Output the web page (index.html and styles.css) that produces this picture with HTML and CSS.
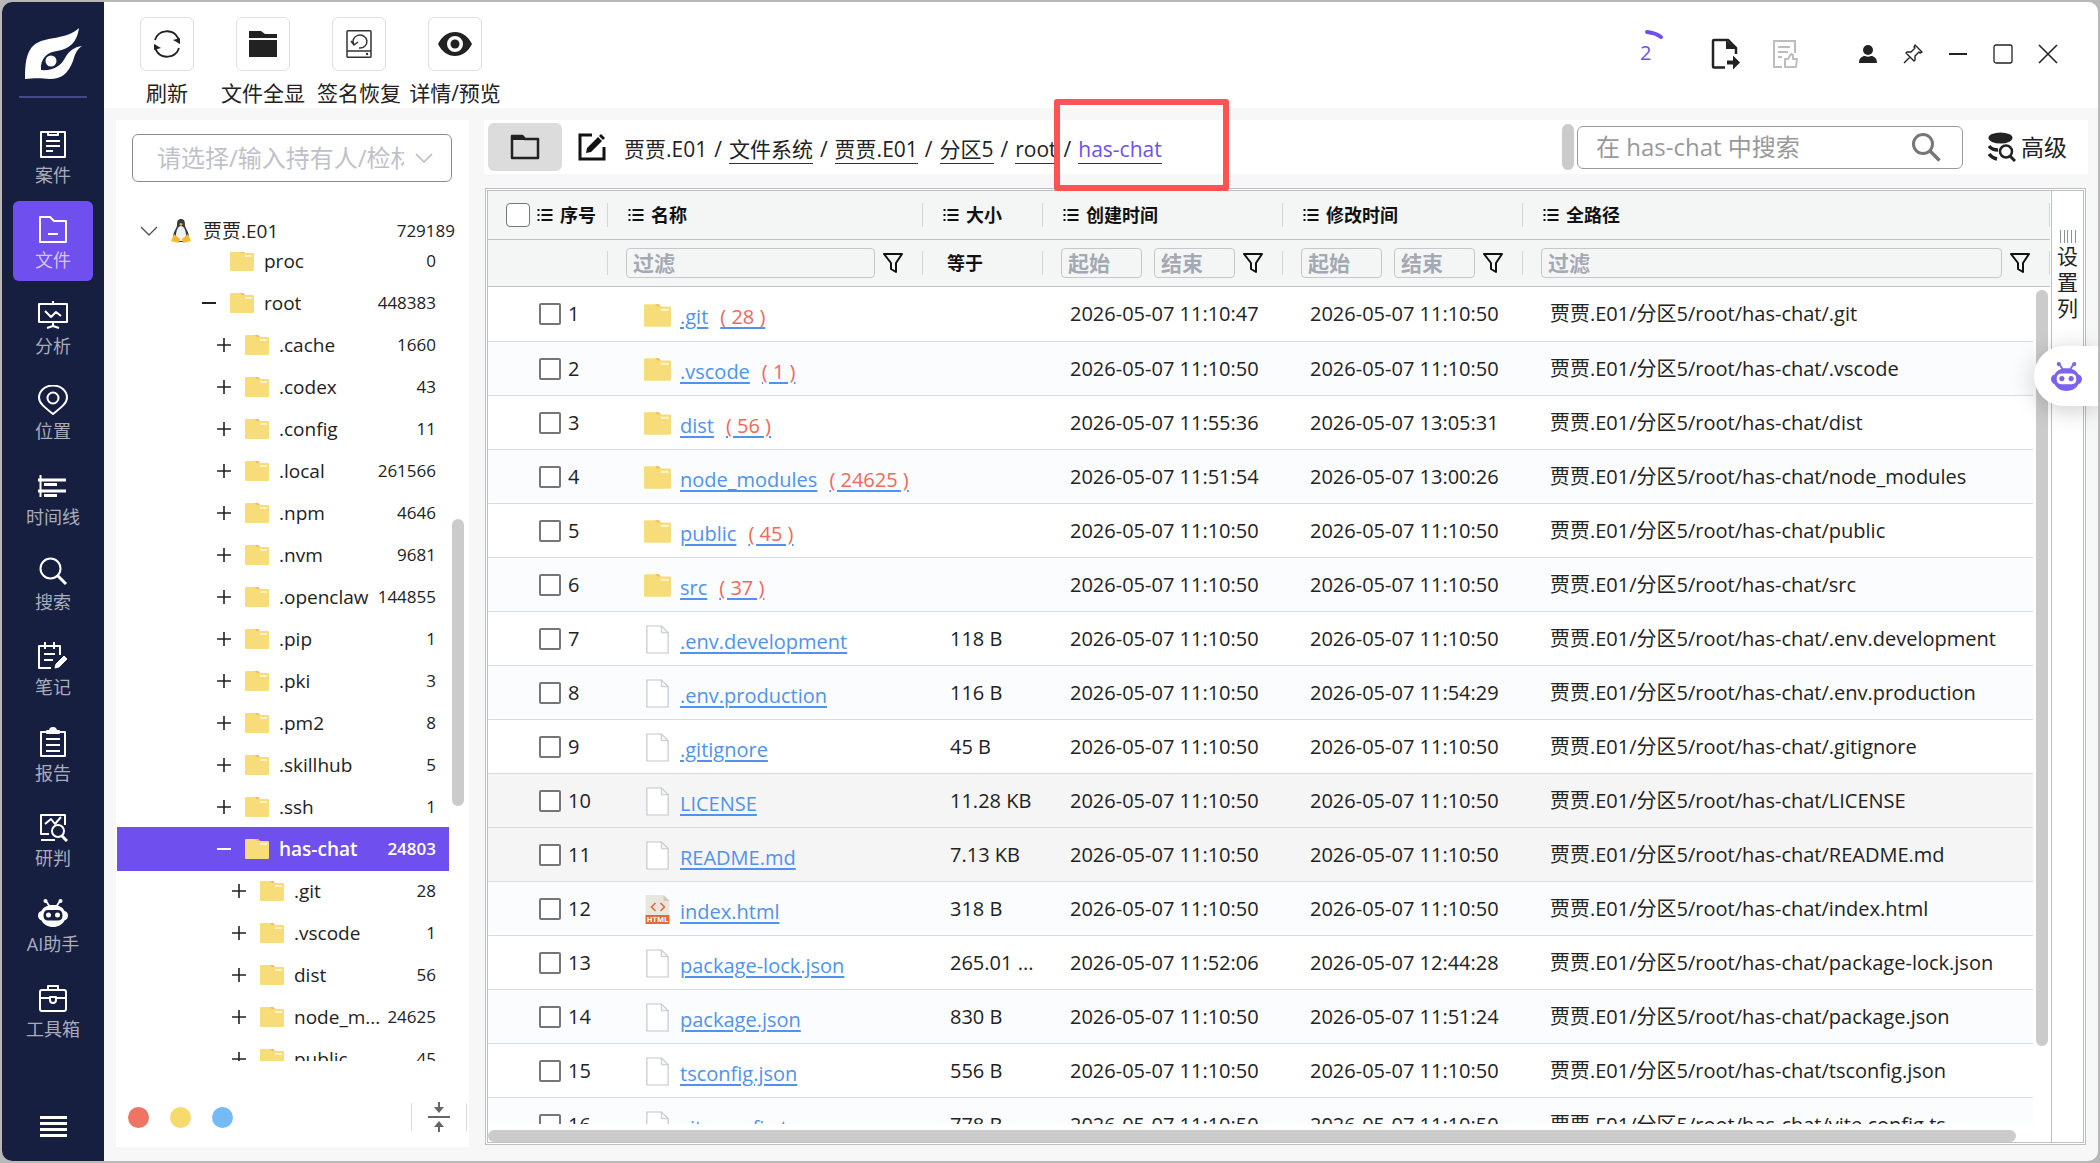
FILE: index.html
```html
<!DOCTYPE html>
<html lang="zh-CN">
<head>
    <meta charset="UTF-8">
    <meta name="viewport" content="width=device-width, initial-scale=1.0">
    <title>文件</title>
    <link rel="stylesheet" href="styles.css">
</head>
<body>
    <svg class="sprite" aria-hidden="true">
        <symbol id="i-folder" viewBox="0 0 24 20">
            <path fill="#f7dc7a" d="M1 0h12l2 2h8a1 1 0 0 1 1 1v16a1 1 0 0 1-1 1H1a1 1 0 0 1-1-1V1a1 1 0 0 1 1-1z"/>
            <path fill="#f3b95f" d="M10 0h3l2 2h-3z"/>
            <path fill="#fff3c4" d="M15 4h7v2h-7z"/>
        </symbol>
        <symbol id="i-file" viewBox="0 0 24 30">
            <path fill="#fff" stroke="#c3c6cc" stroke-width="1.2" d="M1 1h15l7 7v21H1z"/>
            <path fill="#f4f5f7" stroke="#c3c6cc" d="M16 1v7h7z"/>
        </symbol>
        <symbol id="i-html" viewBox="0 0 24 29">
            <path fill="#e9e7dd" d="M0 0h18l6 6v14H0z"/>
            <path fill="#cfccbd" d="M18 0l6 6h-6z"/>
            <path fill="none" stroke="#e2693a" stroke-width="1.6" d="M10 8l-4 4 4 4M15 8l4 4-4 4"/>
            <path fill="#e2693a" d="M0 20h24v9H0z"/>
            <text x="12" y="27.4" text-anchor="middle" font-family="Open Sans" font-size="7.5" font-weight="700" fill="#fff">HTML</text>
        </symbol>
        <symbol id="i-list" viewBox="0 0 15 14">
            <path fill="#111" d="M0 1h2v2H0zM4 1h11v2H4zM0 6h2v2H0zM4 6h11v2H4zM0 11h2v2H0zM4 11h11v2H4z"/>
        </symbol>
        <symbol id="i-funnel" viewBox="0 0 20 20">
            <path fill="none" stroke="#111" stroke-width="2" stroke-linejoin="round" d="M1 1h18l-6 9v9l-5-3v-6z"/>
        </symbol>
        <symbol id="i-plus" viewBox="0 0 14 14">
            <path fill="none" stroke="#222" stroke-width="1.600" d="M0 7h14M7 0v14"/>
        </symbol>
        <symbol id="i-minus" viewBox="0 0 14 14">
            <path fill="none" stroke="currentColor" stroke-width="2" d="M0 7h14"/>
        </symbol>
        <symbol id="i-robot" viewBox="0 0 30 28">
            <path fill="none" stroke="currentColor" stroke-width="1.8" d="M8 2l4 6M22 2l-4 6"/>
            <circle cx="7.500" cy="2" r="2" fill="currentColor"/>
            <circle cx="22.500" cy="2" r="2" fill="currentColor"/>
            <path fill="currentColor" fill-rule="evenodd" d="M15 6c6 0 10 2.500 11.500 6 2 .5 3.500 2 3.500 4.500s-1.500 4.500-3.500 5C24.500 25.500 20 28 15 28S5.500 25.500 3.500 21.500C1.500 21 0 19 0 16.500S1.500 12.500 3.500 12C5 8.500 9 6 15 6zM10 11c-3 0-4.500 2-4.500 5.500S7 21.500 10 21.500h10c3 0 4.500-1.500 4.500-5S23 11 20 11z"/>
            <circle cx="10.500" cy="16" r="2.500" fill="currentColor"/>
            <circle cx="19.500" cy="16" r="2.500" fill="currentColor"/>
        </symbol>
    </svg>

    <div class="window">
        <aside class="sidebar">
            <svg class="logo" viewBox="0 0 57 52">
                <path fill="#fff" fill-rule="evenodd" d="M54 0c-2 14-9 21-22 23-10 1-17 8-16 19 12 1 20-4 24-12 4-7 9-11 17-12-5 3-7 8-9 15C43 46 36 51 25 51 16 50 9 50 0 51 0 36 1 24 9 17 20 8 42 12 54 0z"/>
                <circle cx="26" cy="33" r="5.500" fill="#fff"/>
            </svg>
            <hr class="divider">
            <nav class="menu">
                <a class="menu-item" href="#">
                    <svg viewBox="0 0 30 30"><path d="M3 3h24v25H3zM10 2v4h10V2M8 12h14M8 17h14M8 22h7"/></svg>
                    案件
                </a>
                <a class="menu-item active" href="#">
                    <svg viewBox="0 0 30 30"><path d="M2 3h10l4 4h12v21H2zM10 20h10"/></svg>
                    文件
                </a>
                <a class="menu-item" href="#">
                    <svg viewBox="0 0 30 30"><path d="M1 4h28v18H1zM15 1v3M15 22v5M9 28l6-2 6 2M7 11l6 6 5-5 5 4"/></svg>
                    分析
                </a>
                <a class="menu-item" href="#">
                    <svg viewBox="0 0 30 30"><path d="M15 29C9 24 1 19 1 12.500a14 12 0 0 1 28 0C29 19 21 24 15 29z"/><circle cx="15" cy="13" r="5.500"/></svg>
                    位置
                </a>
                <a class="menu-item" href="#">
                    <svg viewBox="0 0 30 30"><path d="M2.500 4v22" stroke-width="2"/><path d="M0 9h28M6 13.500h13M0 20h28M6 24.500h13" stroke-width="3"/></svg>
                    时间线
                </a>
                <a class="menu-item" href="#">
                    <svg viewBox="0 0 30 30"><circle cx="12.500" cy="12.500" r="10"/><path d="M19.500 19.500L28 28" stroke-width="3"/></svg>
                    搜索
                </a>
                <a class="menu-item" href="#">
                    <svg viewBox="0 0 30 30"><path d="M13 27H1V5h21v9M7 1v7M16 1v7M6 13h11M6 19h9"/><path d="M17 27l1-4 8-8 3 3-8 8z" fill="#fff" stroke-width="1"/></svg>
                    笔记
                </a>
                <a class="menu-item" href="#">
                    <svg viewBox="0 0 30 30"><path d="M3 5h24v24H3zM8 12h14M8 18h14M8 24h14"/><path d="M9 6V4h3a3 3 0 0 1 6 0h3v2z" fill="#fff"/></svg>
                    报告
                </a>
                <a class="menu-item" href="#">
                    <svg viewBox="0 0 30 30"><path d="M27 13V3H3v19h8M3 28h14M7 12l6-5 4 5 6-7"/><circle cx="20" cy="19" r="6"/><path d="M24 24l5 5" stroke-width="3"/></svg>
                    研判
                </a>
                <a class="menu-item" href="#">
                    <svg viewBox="0 0 30 28" class="robot"><use href="#i-robot"/></svg>
                    AI助手
                </a>
                <a class="menu-item" href="#">
                    <svg viewBox="0 0 30 30"><rect x="2" y="7" width="26" height="21" rx="2"/><path d="M10 7V3h10v4M2 15h10M18 15h10M12 14v3a3 3 0 0 0 6 0v-3z"/></svg>
                    工具箱
                </a>
            </nav>
            <button class="collapse" aria-label="菜单">
                <svg viewBox="0 0 27 22"><path fill="#fff" d="M0 0h27v3H0zM0 6h27v3H0zM0 12h27v3H0zM0 18h27v3H0z"/></svg>
            </button>
        </aside>

        <div class="content">
            <header class="toolbar">
                <div class="tools">
                    <button class="tool">
                        <span class="tool-icon"><svg viewBox="0 0 28 28"><path fill="none" stroke="#222" stroke-width="1.8" d="M2 10a12.500 12.500 0 0 1 23-2l1 5M26 18a12.500 12.500 0 0 1-23 2l-1-5"/><path fill="#222" d="M20 10l7 4V8zM8 18l-7-4v6z"/></svg></span>
                        刷新
                    </button>
                    <button class="tool">
                        <span class="tool-icon"><svg viewBox="0 0 28 28"><path fill="#222" d="M0 1h12l4 3h12v4H0zM0 10h28v17H0z"/></svg></span>
                        文件全显
                    </button>
                    <button class="tool">
                        <span class="tool-icon"><svg viewBox="0 0 28 28"><g fill="none" stroke="#333" stroke-width="1.5"><rect x="2" y="0.800" width="24" height="26.500" rx="1"/><path d="M2 21h24M9 15a7 6.500 0 1 1 5 3M6 11l3 4 4-3"/></g><circle cx="22" cy="24" r="1.200" fill="#333"/></svg></span>
                        签名恢复
                    </button>
                    <button class="tool">
                        <span class="tool-icon"><svg class="wide" viewBox="0 0 34 24"><path fill="#222" fill-rule="evenodd" d="M0 12C4 4 10 0 17 0s13 4 17 12c-4 8-10 12-17 12S4 20 0 12zM17 4a8 8 0 1 0 0 16 8 8 0 0 0 0-16z"/><circle cx="17" cy="12" r="4.500" fill="#222"/></svg></span>
                        详情/预览
                    </button>
                </div>
                <div class="actions">
                    <div class="task">
                        <svg viewBox="0 0 22 12"><path fill="none" stroke="#6f50ef" stroke-width="4" stroke-linecap="round" d="M3 3q9 1 14 5"/></svg>
                        <span>2</span>
                    </div>
                    <button class="action" aria-label="导出">
                        <svg width="30" height="32" viewBox="0 0 30 32"><path fill="none" stroke="#222" stroke-width="2.500" d="M14 29.500H3a1 1 0 0 1-1-1V3a1 1 0 0 1 1-1h14l8 8v6"/><path fill="#222" d="M15 2l10 9H15zM16 22.500h6v-5l7 7-7 7v-5h-6z"/></svg>
                    </button>
                    <button class="action" aria-label="报告">
                        <svg width="26" height="30" viewBox="0 0 26 30"><path fill="none" stroke="#bdbdbd" stroke-width="2" d="M10 28H2V2h21v12M6 8h12M6 13h10M6 18h4"/><path fill="none" stroke="#bdbdbd" stroke-width="2" stroke-linejoin="round" d="M13 20h3l3-5 2 1v4h4l-1 8H13z"/></svg>
                    </button>
                    <div class="window-buttons">
                        <button aria-label="用户"><svg viewBox="0 0 20 20"><circle cx="10" cy="6" r="5" fill="#222"/><path fill="#222" d="M1 19c0-5 3-7 6-7 2 1 4 1 6 0 3 0 6 2 6 7z"/></svg></button>
                        <button aria-label="置顶"><svg viewBox="0 0 20 20"><path fill="none" stroke="#222" stroke-width="1.400" stroke-linejoin="round" d="M12 1l7 7-2 1-1-1-4 4v4l-1 1-8-8 1-1h4l4-4-1-1zM7 13l-6 6"/></svg></button>
                        <button aria-label="最小化"><svg viewBox="0 0 20 20"><path stroke="#222" stroke-width="2" d="M1 10h18"/></svg></button>
                        <button aria-label="最大化"><svg viewBox="0 0 20 20"><rect x="1" y="1" width="18" height="18" rx="2" fill="none" stroke="#222" stroke-width="1.300"/></svg></button>
                        <button aria-label="关闭"><svg viewBox="0 0 20 20"><path stroke="#222" stroke-width="1.600" d="M1 1l18 18M19 1L1 19"/></svg></button>
                    </div>
                </div>
            </header>

            <div class="panels">
                <section class="tree-panel">
                    <div class="owner">
                        <input type="text" aria-label="持有人" placeholder="请选择/输入持有人/检材">
                        <svg viewBox="0 0 18 10"><path fill="none" stroke="#b5b8bf" stroke-width="1.500" d="M1 1l8 8 8-8"/></svg>
                    </div>
                    <div class="tree-root">
                        <svg class="chevron" viewBox="0 0 18 10"><path fill="none" stroke="#555" stroke-width="1.400" d="M1 1l8 8 8-8"/></svg>
                        <svg class="tux" viewBox="0 0 20 24">
                            <path fill="#2f3b45" d="M10 0c3 0 4 2 4 6 0 3 4 7 4 12 0 3-3 5-8 5s-8-2-8-5c0-5 4-9 4-12 0-4 1-6 4-6z"/>
                            <path fill="#f2f2f2" d="M10 7c3 0 5 5 5 9s-2 6-5 6-5-2-5-6 2-9 5-9z"/>
                            <path fill="#f5b82e" d="M8 5l2-1 2 1-2 2zM3 15l6 5-1 4-8-2zM17 15l-6 5 1 4 8-2z"/>
                        </svg>
                        <span class="name">贾贾.E01</span>
                        <span class="count">729189</span>
                    </div>
                    <div class="tree-scroll">
                        <ul class="tree">
                            <li class="level-1"><span class="toggle"></span><svg class="folder"><use href="#i-folder"/></svg><span class="name">proc</span><span class="count">0</span></li>
                            <li class="level-1"><svg class="toggle"><use href="#i-minus"/></svg><svg class="folder"><use href="#i-folder"/></svg><span class="name">root</span><span class="count">448383</span></li>
                            <li class="level-2"><svg class="toggle"><use href="#i-plus"/></svg><svg class="folder"><use href="#i-folder"/></svg><span class="name">.cache</span><span class="count">1660</span></li>
                            <li class="level-2"><svg class="toggle"><use href="#i-plus"/></svg><svg class="folder"><use href="#i-folder"/></svg><span class="name">.codex</span><span class="count">43</span></li>
                            <li class="level-2"><svg class="toggle"><use href="#i-plus"/></svg><svg class="folder"><use href="#i-folder"/></svg><span class="name">.config</span><span class="count">11</span></li>
                            <li class="level-2"><svg class="toggle"><use href="#i-plus"/></svg><svg class="folder"><use href="#i-folder"/></svg><span class="name">.local</span><span class="count">261566</span></li>
                            <li class="level-2"><svg class="toggle"><use href="#i-plus"/></svg><svg class="folder"><use href="#i-folder"/></svg><span class="name">.npm</span><span class="count">4646</span></li>
                            <li class="level-2"><svg class="toggle"><use href="#i-plus"/></svg><svg class="folder"><use href="#i-folder"/></svg><span class="name">.nvm</span><span class="count">9681</span></li>
                            <li class="level-2"><svg class="toggle"><use href="#i-plus"/></svg><svg class="folder"><use href="#i-folder"/></svg><span class="name">.openclaw</span><span class="count">144855</span></li>
                            <li class="level-2"><svg class="toggle"><use href="#i-plus"/></svg><svg class="folder"><use href="#i-folder"/></svg><span class="name">.pip</span><span class="count">1</span></li>
                            <li class="level-2"><svg class="toggle"><use href="#i-plus"/></svg><svg class="folder"><use href="#i-folder"/></svg><span class="name">.pki</span><span class="count">3</span></li>
                            <li class="level-2"><svg class="toggle"><use href="#i-plus"/></svg><svg class="folder"><use href="#i-folder"/></svg><span class="name">.pm2</span><span class="count">8</span></li>
                            <li class="level-2"><svg class="toggle"><use href="#i-plus"/></svg><svg class="folder"><use href="#i-folder"/></svg><span class="name">.skillhub</span><span class="count">5</span></li>
                            <li class="level-2"><svg class="toggle"><use href="#i-plus"/></svg><svg class="folder"><use href="#i-folder"/></svg><span class="name">.ssh</span><span class="count">1</span></li>
                            <li class="level-2 selected"><svg class="toggle"><use href="#i-minus"/></svg><svg class="folder"><use href="#i-folder"/></svg><span class="name">has-chat</span><span class="count">24803</span></li>
                            <li class="level-3"><svg class="toggle"><use href="#i-plus"/></svg><svg class="folder"><use href="#i-folder"/></svg><span class="name">.git</span><span class="count">28</span></li>
                            <li class="level-3"><svg class="toggle"><use href="#i-plus"/></svg><svg class="folder"><use href="#i-folder"/></svg><span class="name">.vscode</span><span class="count">1</span></li>
                            <li class="level-3"><svg class="toggle"><use href="#i-plus"/></svg><svg class="folder"><use href="#i-folder"/></svg><span class="name">dist</span><span class="count">56</span></li>
                            <li class="level-3"><svg class="toggle"><use href="#i-plus"/></svg><svg class="folder"><use href="#i-folder"/></svg><span class="name">node_m...</span><span class="count">24625</span></li>
                            <li class="level-3"><svg class="toggle"><use href="#i-plus"/></svg><svg class="folder"><use href="#i-folder"/></svg><span class="name">public</span><span class="count">45</span></li>
                        </ul>
                        <div class="tree-bar"></div>
                    </div>
                    <div class="tree-footer">
                        <span class="dot red"></span>
                        <span class="dot yellow"></span>
                        <span class="dot blue"></span>
                        <button class="fold" aria-label="全部折叠">
                            <svg viewBox="0 0 22 30"><path fill="#666" d="M0 14h22v2H0zM10 0h2v5h4l-5 6-5-6h4zM10 30h2v-5h4l-5-6-5 6h4z"/></svg>
                        </button>
                    </div>
                </section>

                <main class="main">
                    <div class="path-bar">
                        <button class="folder-button" aria-label="文件夹">
                            <svg viewBox="0 0 30 26"><path fill="none" stroke="#222" stroke-width="2.500" stroke-linejoin="round" d="M2 2h10l3 3h13v19H2z"/><path fill="#222" d="M2 1h11l3 5H2z"/></svg>
                        </button>
                        <button class="edit-button" aria-label="编辑">
                            <svg viewBox="0 0 28 28"><path fill="none" stroke="#111" stroke-width="3" d="M14 2H2v24h24V14"/><path fill="#111" d="M8 20l1-5L20 4l4 4-11 11zM21 3l2-2 4 4-2 2z"/></svg>
                        </button>
                        <nav class="crumbs">
                            <span>贾贾.E01</span>/
                            <a href="#">文件系统</a>/
                            <a href="#">贾贾.E01</a>/
                            <a href="#">分区5</a>/
                            <a href="#">root</a>/
                            <span class="current"><a href="#">has-chat</a><span class="mark"></span></span>
                        </nav>
                        <span class="path-thumb"></span>
                        <div class="search">
                            <input type="text" aria-label="搜索" placeholder="在 has-chat 中搜索">
                            <svg viewBox="0 0 30 30"><circle cx="12" cy="12" r="9.500" fill="none" stroke="#777" stroke-width="3"/><path stroke="#777" stroke-width="3.500" d="M19 19l9.500 9.500"/></svg>
                        </div>
                        <button class="advanced">
                            <svg viewBox="0 0 28 30"><ellipse cx="12.500" cy="6" rx="12" ry="5.500" fill="#222"/><path fill="none" stroke="#222" stroke-width="3.500" d="M1 14q3 4 9 4M1 22q3 4 8 5"/><circle cx="18" cy="19.500" r="6" fill="#fff" stroke="#222" stroke-width="2.500"/><path stroke="#222" stroke-width="3" d="M22 24l5 5"/></svg>
                            高级
                        </button>
                    </div>

                    <div class="grid">
                        <div class="grid-main">
                            <div class="grid-view">
                                <table>
                                    <colgroup>
                                        <col class="col-index"><col class="col-name"><col class="col-size"><col class="col-date"><col class="col-date"><col><col class="col-bar">
                                    </colgroup>
                                    <thead>
                                        <tr class="titles">
                                            <th><div class="title first"><input type="checkbox" aria-label="全选"><svg><use href="#i-list"/></svg>序号</div></th>
                                            <th><div class="title"><svg><use href="#i-list"/></svg>名称</div></th>
                                            <th><div class="title"><svg><use href="#i-list"/></svg>大小</div></th>
                                            <th><div class="title"><svg><use href="#i-list"/></svg>创建时间</div></th>
                                            <th><div class="title"><svg><use href="#i-list"/></svg>修改时间</div></th>
                                            <th colspan="2"><div class="title"><svg><use href="#i-list"/></svg>全路径</div></th>
                                        </tr>
                                        <tr class="filters">
                                            <th><div class="filter"></div></th>
                                            <th><div class="filter"><input type="text" aria-label="名称过滤" placeholder="过滤"><svg><use href="#i-funnel"/></svg></div></th>
                                            <th><div class="filter equal">等于</div></th>
                                            <th><div class="filter range"><input type="text" aria-label="创建时间起始" placeholder="起始"><input type="text" aria-label="创建时间结束" placeholder="结束"><svg><use href="#i-funnel"/></svg></div></th>
                                            <th><div class="filter range"><input type="text" aria-label="修改时间起始" placeholder="起始"><input type="text" aria-label="修改时间结束" placeholder="结束"><svg><use href="#i-funnel"/></svg></div></th>
                                            <th colspan="2"><div class="filter"><input type="text" aria-label="全路径过滤" placeholder="过滤"><svg><use href="#i-funnel"/></svg></div></th>
                                        </tr>
                                    </thead>
                                    <tbody>
                                        <tr><td><label><input type="checkbox">1</label></td><td><div class="file"><svg><use href="#i-folder"/></svg><a href="#">.git<span>( 28 )</span></a></div></td><td></td><td>2026-05-07 11:10:47</td><td>2026-05-07 11:10:50</td><td>贾贾.E01/分区5/root/has-chat/.git</td><td></td></tr>
                                        <tr><td><label><input type="checkbox">2</label></td><td><div class="file"><svg><use href="#i-folder"/></svg><a href="#">.vscode<span>( 1 )</span></a></div></td><td></td><td>2026-05-07 11:10:50</td><td>2026-05-07 11:10:50</td><td>贾贾.E01/分区5/root/has-chat/.vscode</td><td></td></tr>
                                        <tr><td><label><input type="checkbox">3</label></td><td><div class="file"><svg><use href="#i-folder"/></svg><a href="#">dist<span>( 56 )</span></a></div></td><td></td><td>2026-05-07 11:55:36</td><td>2026-05-07 13:05:31</td><td>贾贾.E01/分区5/root/has-chat/dist</td><td></td></tr>
                                        <tr><td><label><input type="checkbox">4</label></td><td><div class="file"><svg><use href="#i-folder"/></svg><a href="#">node_modules<span>( 24625 )</span></a></div></td><td></td><td>2026-05-07 11:51:54</td><td>2026-05-07 13:00:26</td><td>贾贾.E01/分区5/root/has-chat/node_modules</td><td></td></tr>
                                        <tr><td><label><input type="checkbox">5</label></td><td><div class="file"><svg><use href="#i-folder"/></svg><a href="#">public<span>( 45 )</span></a></div></td><td></td><td>2026-05-07 11:10:50</td><td>2026-05-07 11:10:50</td><td>贾贾.E01/分区5/root/has-chat/public</td><td></td></tr>
                                        <tr><td><label><input type="checkbox">6</label></td><td><div class="file"><svg><use href="#i-folder"/></svg><a href="#">src<span>( 37 )</span></a></div></td><td></td><td>2026-05-07 11:10:50</td><td>2026-05-07 11:10:50</td><td>贾贾.E01/分区5/root/has-chat/src</td><td></td></tr>
                                        <tr><td><label><input type="checkbox">7</label></td><td><div class="file"><svg><use href="#i-file"/></svg><a href="#">.env.development</a></div></td><td>118 B</td><td>2026-05-07 11:10:50</td><td>2026-05-07 11:10:50</td><td>贾贾.E01/分区5/root/has-chat/.env.development</td><td></td></tr>
                                        <tr><td><label><input type="checkbox">8</label></td><td><div class="file"><svg><use href="#i-file"/></svg><a href="#">.env.production</a></div></td><td>116 B</td><td>2026-05-07 11:10:50</td><td>2026-05-07 11:54:29</td><td>贾贾.E01/分区5/root/has-chat/.env.production</td><td></td></tr>
                                        <tr><td><label><input type="checkbox">9</label></td><td><div class="file"><svg><use href="#i-file"/></svg><a href="#">.gitignore</a></div></td><td>45 B</td><td>2026-05-07 11:10:50</td><td>2026-05-07 11:10:50</td><td>贾贾.E01/分区5/root/has-chat/.gitignore</td><td></td></tr>
                                        <tr class="hover"><td><label><input type="checkbox">10</label></td><td><div class="file"><svg><use href="#i-file"/></svg><a href="#">LICENSE</a></div></td><td>11.28 KB</td><td>2026-05-07 11:10:50</td><td>2026-05-07 11:10:50</td><td>贾贾.E01/分区5/root/has-chat/LICENSE</td><td></td></tr>
                                        <tr class="hover"><td><label><input type="checkbox">11</label></td><td><div class="file"><svg><use href="#i-file"/></svg><a href="#">README.md</a></div></td><td>7.13 KB</td><td>2026-05-07 11:10:50</td><td>2026-05-07 11:10:50</td><td>贾贾.E01/分区5/root/has-chat/README.md</td><td></td></tr>
                                        <tr><td><label><input type="checkbox">12</label></td><td><div class="file"><svg><use href="#i-html"/></svg><a href="#">index.html</a></div></td><td>318 B</td><td>2026-05-07 11:10:50</td><td>2026-05-07 11:10:50</td><td>贾贾.E01/分区5/root/has-chat/index.html</td><td></td></tr>
                                        <tr><td><label><input type="checkbox">13</label></td><td><div class="file"><svg><use href="#i-file"/></svg><a href="#">package-lock.json</a></div></td><td>265.01 ...</td><td>2026-05-07 11:52:06</td><td>2026-05-07 12:44:28</td><td>贾贾.E01/分区5/root/has-chat/package-lock.json</td><td></td></tr>
                                        <tr><td><label><input type="checkbox">14</label></td><td><div class="file"><svg><use href="#i-file"/></svg><a href="#">package.json</a></div></td><td>830 B</td><td>2026-05-07 11:10:50</td><td>2026-05-07 11:51:24</td><td>贾贾.E01/分区5/root/has-chat/package.json</td><td></td></tr>
                                        <tr><td><label><input type="checkbox">15</label></td><td><div class="file"><svg><use href="#i-file"/></svg><a href="#">tsconfig.json</a></div></td><td>556 B</td><td>2026-05-07 11:10:50</td><td>2026-05-07 11:10:50</td><td>贾贾.E01/分区5/root/has-chat/tsconfig.json</td><td></td></tr>
                                        <tr><td><label><input type="checkbox">16</label></td><td><div class="file"><svg><use href="#i-file"/></svg><a href="#">vite.config.ts</a></div></td><td>778 B</td><td>2026-05-07 11:10:50</td><td>2026-05-07 11:10:50</td><td>贾贾.E01/分区5/root/has-chat/vite.config.ts</td><td></td></tr>
                                    </tbody>
                                </table>
                                <div class="bar-y"></div>
                            </div>
                            <div class="bar-x"></div>
                        </div>
                        <button class="columns">
                            <svg viewBox="0 0 16 13"><path fill="#8d9499" d="M0 0h1v13H0zM4 0h1v13H4zM7 0h1v13H7zM11 0h1v13h-1zM15 0h1v13h-1z"/></svg>
                            <span>设</span><span>置</span><span>列</span>
                        </button>
                    </div>
                </main>
            </div>
        </div>
        <button class="assistant" aria-label="AI助手"><svg viewBox="0 0 30 28"><use href="#i-robot"/></svg></button>
    </div>
</body>
</html>
```

FILE: styles.css
```css
* {
    box-sizing: border-box;
}

body {
    margin: 0;
    height: 100vh;
    padding: 2px;
    background: #b8b8b8;
    color: #222;
    font-family: "Open Sans", "Noto Sans CJK SC", sans-serif;
    font-size: 20px;
    line-height: 28px;
    overflow: hidden;
}

button,
input {
    font: inherit;
    color: inherit;
    margin: 0;
}

button {
    background: none;
    border: none;
    padding: 0;
    cursor: pointer;
}

svg {
    display: block;
    flex-shrink: 0;
}

.sprite {
    position: absolute;
    width: 0;
    height: 0;
}

.window {
    position: relative;
    display: flex;
    height: 100%;
    background: #f7f7f7;
    border-radius: 10px;
    overflow: hidden;
}

/* sidebar */
.sidebar {
    width: 102px;
    flex-shrink: 0;
    display: flex;
    flex-direction: column;
    align-items: center;
    background: #171f40;
    padding-bottom: 23px;
}

.logo {
    width: 57px;
    height: 52px;
    margin: 26px 0 16px;
}

.divider {
    width: 68px;
    margin: 0 0 18px;
    border: none;
    border-top: 2px solid #434a85;
}

.menu {
    flex: 1;
    display: flex;
    flex-direction: column;
    justify-content: space-between;
    margin-bottom: 66px;
}

.menu-item {
    width: 80px;
    height: 80px;
    display: flex;
    flex-direction: column;
    align-items: center;
    justify-content: center;
    gap: 3px;
    padding-top: 5px;
    border-radius: 6px;
    color: #a9adbb;
    font-size: 18px;
    line-height: 26px;
    text-decoration: none;
    white-space: nowrap;
}

.menu-item svg {
    width: 30px;
    height: 30px;
    fill: none;
    stroke: #fff;
    stroke-width: 2;
    stroke-linejoin: round;
}

.menu-item .robot {
    stroke: none;
    color: #fff;
}

.menu-item.active {
    background: #6f50ef;
    color: #cfc5fa;
}

.collapse svg {
    width: 27px;
    height: 22px;
}

/* toolbar */
.content {
    flex: 1;
    min-width: 0;
    display: flex;
    flex-direction: column;
}

.toolbar {
    height: 106px;
    flex-shrink: 0;
    display: flex;
    justify-content: space-between;
    background: #fff;
    padding: 15px 40px 0 21px;
}

.tools {
    display: flex;
    gap: 12px;
}

.tool {
    width: 84px;
    display: flex;
    flex-direction: column;
    align-items: center;
    gap: 8px;
    font-size: 21px;
    white-space: nowrap;
}

.tool-icon {
    width: 54px;
    height: 54px;
    display: flex;
    align-items: center;
    justify-content: center;
    border: 1px solid #e0e0e0;
    border-radius: 6px;
}

.tool-icon svg {
    width: 28px;
    height: 28px;
}

.tool-icon .wide {
    width: 34px;
    height: 24px;
}

.actions {
    height: 74px;
    display: flex;
    align-items: center;
    gap: 31px;
}

.task {
    width: 22px;
    height: 60px;
    margin-right: 18px;
    color: #6f50ef;
    line-height: 24px;
}

.task svg {
    width: 22px;
    height: 12px;
    margin-left: 4px;
    margin-top: 5px;
}

.window-buttons {
    display: flex;
    gap: 25px;
    margin-left: 29px;
}

.window-buttons svg {
    width: 20px;
    height: 20px;
}

.panels {
    flex: 1;
    min-height: 0;
    display: flex;
    gap: 15px;
    padding: 12px 10px 14px 12px;
}

/* tree */
.tree-panel {
    width: 353px;
    flex-shrink: 0;
    display: flex;
    flex-direction: column;
    background: #fff;
}

.owner {
    height: 48px;
    flex-shrink: 0;
    display: flex;
    align-items: center;
    gap: 11px;
    margin: 14px 17px 0 16px;
    padding: 0 18px 0 24px;
    border: 1px solid #8c8c8c;
    border-radius: 6px;
}

.owner input {
    flex: 1;
    min-width: 0;
    padding: 0;
    border: none;
    outline: none;
    font-size: 24px;
}

.owner input::placeholder {
    color: #bfc1c9;
}

.owner svg {
    width: 18px;
    height: 10px;
}

.tree-root {
    height: 42px;
    display: flex;
    align-items: center;
    margin-top: 28px;
    padding: 0 14px 0 24px;
    font-size: 19px;
}

.chevron {
    width: 18px;
    height: 10px;
}

.tux {
    width: 20px;
    height: 24px;
    margin: 0 12px 0 13px;
}

.name {
    flex: 1;
    min-width: 0;
    overflow: hidden;
    text-overflow: ellipsis;
    white-space: nowrap;
}

.count {
    font-size: 17px;
}

.tree-scroll {
    position: relative;
    flex: 1;
    min-height: 0;
    overflow: hidden;
}

.tree {
    list-style: none;
    margin: -12px 20px 0 1px;
    padding: 0;
    font-size: 19px;
}

.tree li {
    height: 42px;
    display: flex;
    align-items: center;
    padding-right: 13px;
}

.tree .level-1 {
    padding-left: 85px;
}

.tree .level-2 {
    padding-left: 100px;
}

.tree .level-3 {
    padding-left: 115px;
}

.tree li.selected {
    height: 44px;
    margin: -1px 0;
    background: #6f50ef;
    color: #fff;
    font-weight: 600;
}

.toggle {
    width: 14px;
    height: 14px;
}

.folder {
    width: 24px;
    height: 20px;
    margin: 0 10px 0 14px;
}

.tree-bar {
    position: absolute;
    top: 267px;
    bottom: 255px;
    right: 5px;
    width: 12px;
    border-radius: 6px;
    background: #cbcbcb;
}

.tree-footer {
    height: 86px;
    flex-shrink: 0;
    display: flex;
    align-items: center;
    gap: 21px;
    padding: 26px 2px 0 12px;
}

.dot {
    width: 21px;
    height: 21px;
    border-radius: 50%;
}

.red {
    background: #ee7564;
}

.yellow {
    background: #f7da6e;
}

.blue {
    background: #76baf5;
}

.fold {
    width: 56px;
    height: 28px;
    margin-left: auto;
    display: flex;
    align-items: center;
    justify-content: center;
    border: 1px solid #dcdcdc;
    border-width: 0 1px;
}

.fold svg {
    width: 22px;
    height: 30px;
}

/* path bar */
.main {
    flex: 1;
    min-width: 0;
    display: flex;
    flex-direction: column;
    gap: 12px;
}

.path-bar {
    height: 54px;
    flex-shrink: 0;
    display: flex;
    align-items: center;
    background: #fff;
    padding: 0 21px 0 4px;
}

.folder-button {
    width: 74px;
    height: 48px;
    display: flex;
    align-items: center;
    justify-content: center;
    border-radius: 6px;
    background: #dcdcdc;
}

.folder-button svg {
    width: 30px;
    height: 26px;
}

.edit-button {
    margin: 0 18px 0 16px;
}

.edit-button svg {
    width: 28px;
    height: 28px;
}

.crumbs {
    flex: 1;
    display: flex;
    align-items: center;
    gap: 7px;
    padding-top: 4px;
    font-size: 21px;
    white-space: nowrap;
}

.crumbs a {
    color: inherit;
    text-decoration: none;
    border-bottom: 1px solid #333;
}

.crumbs .current {
    position: relative;
    color: #6f50ef;
}

/* red frame round the current folder */
.mark {
    position: absolute;
    top: -36px;
    left: -24px;
    width: 175px;
    height: 92px;
    border: 6px solid #ff5252;
    border-radius: 3px;
    pointer-events: none;
}

.path-thumb {
    width: 12px;
    height: 46px;
    border-radius: 6px;
    background: #cbcbcb;
}

.search {
    width: 386px;
    height: 43px;
    display: flex;
    align-items: center;
    margin: 0 25px 0 3px;
    padding: 0 21px 0 18px;
    border: 1px solid #999;
    border-radius: 6px;
}

.search input {
    flex: 1;
    min-width: 0;
    padding: 0;
    border: none;
    outline: none;
    font-size: 24px;
}

.search input::placeholder {
    color: #999;
}

.search svg {
    width: 30px;
    height: 30px;
}

.advanced {
    display: flex;
    align-items: center;
    gap: 5px;
    font-size: 23px;
}

.advanced svg {
    width: 28px;
    height: 30px;
}

/* file grid */
.grid {
    flex: 1;
    min-height: 0;
    display: flex;
    margin: 2px 2px 2px 1px;
    border: 3px double #bdc0c3;
    background: #fff;
}

.grid-main {
    flex: 1;
    min-width: 0;
    display: flex;
    flex-direction: column;
    gap: 6px;
    padding-right: 1px;
}

.grid-view {
    position: relative;
    flex: 1;
    min-height: 0;
    overflow: hidden;
}

table {
    width: 100%;
    table-layout: fixed;
    border-collapse: separate;
    border-spacing: 0;
}

.col-index,
.col-size {
    width: 120px;
}

.col-name {
    width: 315px;
}

.col-date {
    width: 240px;
}

.col-bar {
    width: 17px;
}

th {
    padding: 0;
    background: #f4f6f6;
    border-bottom: 1px solid #bdc3c7;
    font-size: 18px;
    font-weight: 700;
    color: #111;
    text-align: left;
}

.titles th {
    height: 49px;
}

.filters th {
    height: 47px;
}

.title,
.filter {
    height: 24px;
    display: flex;
    align-items: center;
    border-right: 1px solid #d3d7d9;
    padding-left: 20px;
}

.title {
    gap: 7px;
}

.title.first {
    padding-left: 18px;
}

.title svg {
    width: 16px;
    height: 14px;
}

.filter {
    gap: 8px;
    padding: 0 19px 0 18px;
}

.filter.equal {
    padding-left: 24px;
}

.filter.range {
    gap: 12px;
}

.filter.range svg {
    margin-left: -4px;
}

.filter svg {
    width: 20px;
    height: 20px;
}

.filter input {
    flex: 1;
    min-width: 0;
    height: 30px;
    padding: 0 6px;
    border: 1px solid #c4c8ca;
    border-radius: 4px;
    background: none;
    font-size: 21px;
    font-weight: 700;
}

.filter input::placeholder {
    color: #a4a8b3;
}

input[type="checkbox"] {
    appearance: none;
    flex-shrink: 0;
    width: 22px;
    height: 22px;
    border: 2px solid #767676;
    border-radius: 2px;
    background: #fff;
}

.first input[type="checkbox"] {
    width: 24px;
    height: 24px;
    border-width: 1px;
    border-radius: 4px;
}

td {
    height: 54px;
    padding: 0 0 0 27px;
    border-bottom: 1px solid #d9dcde;
    white-space: nowrap;
}

/* the first row sits one pixel lower under the header */
tbody tr:first-child td {
    height: 55px;
}

tbody tr:nth-child(even) td {
    background: #fbfcfe;
}

tbody tr.hover td {
    background: #f5f5f5;
}

tbody tr td:last-child {
    padding: 0;
    border: none;
    background: #fff;
}

td:first-child {
    padding-left: 51px;
}

td label {
    display: flex;
    align-items: center;
    gap: 7px;
}

.file {
    display: flex;
    align-items: center;
    gap: 9px;
    padding: 2px 0 0 9px;
}

.file svg {
    width: 27px;
    height: 29px;
}

.file a {
    padding-top: 4px;
    color: #4f93ee;
    text-underline-offset: 3px;
    text-decoration-thickness: 2px;
}

.file a span {
    margin-left: 12px;
    color: #f0685a;
}

.bar-y {
    position: absolute;
    top: 99px;
    bottom: 78px;
    right: 2px;
    width: 12px;
    border-radius: 6px;
    background: #cbcbcb;
}

.bar-x {
    height: 12px;
    margin-right: 34px;
    border-radius: 6px;
    background: #cbcbcb;
}

.columns {
    width: 32px;
    display: flex;
    flex-direction: column;
    align-items: center;
    padding-top: 39px;
    border-left: 1px solid #bdc0c3;
    font-size: 21px;
    line-height: 26px;
}

.columns svg {
    width: 16px;
    height: 13px;
}

/* floating assistant */
.assistant {
    position: absolute;
    top: 344px;
    right: 0;
    width: 64px;
    height: 60px;
    padding-left: 17px;
    border-radius: 30px 0 0 30px;
    background: #fff;
    box-shadow: 0 4px 24px rgba(0, 0, 0, 0.2);
    color: #7c63ee;
}

.assistant svg {
    width: 31px;
    height: 29px;
}
```
